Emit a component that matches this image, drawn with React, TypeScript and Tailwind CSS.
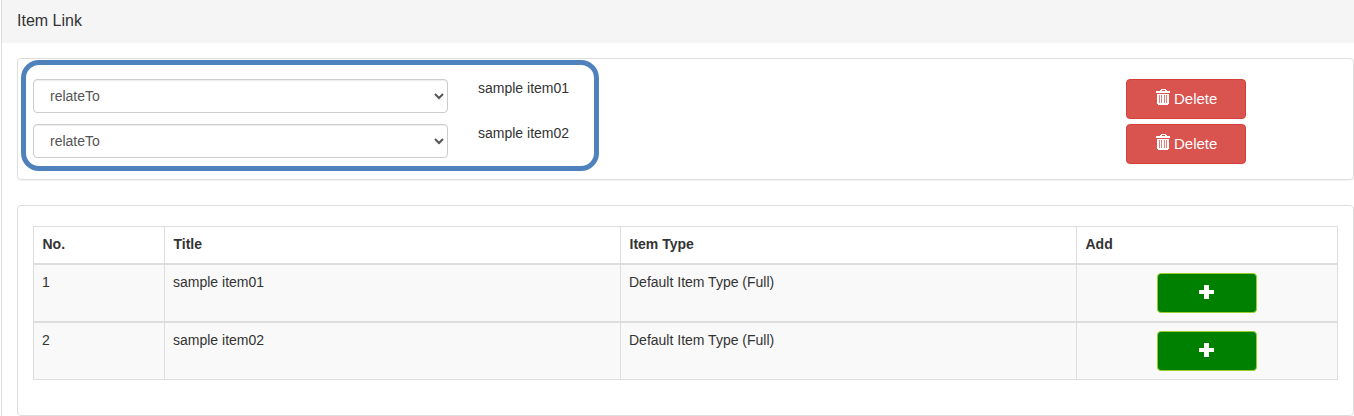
import React from "react";

const links = ["sample item01", "sample item02"];

function TrashIcon() {
  return (
    <svg width="14" height="16" viewBox="0 0 14 16" fill="#fff" shapeRendering="crispEdges" aria-hidden="true">
      <path d="M5 0h5v1h1v1h3v2H0V2h4V1h1zM6 1v1h3V1z" fillRule="evenodd" />
      <path d="M1 5h12v10h-1v1H2v-1H1z" />
      <path d="M3 6h1v8H3zM5 6h1v8H5zM8 6h1v8H8zM10 6h1v8h-1z" fill="#d9534f" fillOpacity="0.75" />
    </svg>
  );
}

function PlusIcon() {
  return (
    <svg width="15" height="14" viewBox="0 0 15 14" fill="#fff" aria-hidden="true">
      <path d="M5.5 0h4q.5 0 .5.5V5h4.5q.5 0 .5.5v3q0 .5-.5.5H10v4.500q0 .5-.5.5h-4q-.5 0-.5-.5V9H.5Q0 9 0 8.500v-3Q0 5 .5 5H5V.5q0-.5.5-.5z" />
    </svg>
  );
}

function LinkRow({ title }: { title: string }) {
  return (
    <div className="flex h-[45px] items-start">
      <select className="h-[34px] w-[415px] rounded-[4px] border border-[#ccc] bg-white px-3 py-1.5 text-[14px] leading-5 text-[#555] shadow-[inset_0_1px_1px_rgba(0,0,0,0.075)]">
        <option>relateTo</option>
      </select>
      <span className="-mt-px ml-[30px] w-[648px] leading-5">{title}</span>
      <button className="flex h-10 w-[120px] items-start gap-[4px] rounded-[4px] border border-[#d43f3a] bg-[#d9534f] pl-[29px] pt-[9px] text-[15px] leading-5 text-white">
        <TrashIcon />
        <span>Delete</span>
      </button>
    </div>
  );
}

export default function App() {
  return (
    <div className="h-[416px] w-full overflow-hidden bg-white pl-px font-['Liberation_Sans',Arial,sans-serif] text-[14px] leading-5 text-[#333]">
      <div className="h-full border-l border-[#ddd]">
        <header className="flex h-[43px] items-center bg-[#f5f5f5] pb-[1px] pl-[15px] text-[16px]">
          Item Link
        </header>
        <main className="pl-[15px] pt-[15px]">
          <section className="relative h-[122px] rounded-[4px] border border-[#ddd] pl-[15px] pt-[20px] shadow-[0_1px_1px_rgba(0,0,0,0.05)]">
            {links.map((t) => (
              <LinkRow key={t} title={t} />
            ))}
            <div className="pointer-events-none absolute left-[3px] top-[1px] h-[111px] w-[578px] rounded-[18px] border-[5px] border-[#4f81bd]" />
          </section>
          <section className="mt-[25px] h-[211px] rounded-[4px] border border-[#ddd] px-[15px] pt-[20px]">
            <table className="w-[1305px] table-fixed border-separate border-spacing-0 border-l border-t border-[#ddd] text-left">
              <colgroup>
                <col className="w-[131px]" />
                <col className="w-[456px]" />
                <col className="w-[456px]" />
                <col className="w-[261px]" />
              </colgroup>
              <thead>
                <tr className="h-[38px] align-top">
                  {["No.", "Title", "Item Type", "Add"].map((h) => (
                    <th key={h} className="border-b-2 border-r border-[#ddd] pl-[8.5px] pr-2 pt-[7px] font-bold">
                      {h}
                    </th>
                  ))}
                </tr>
              </thead>
              <tbody className="bg-[#f9f9f9]">
                {links.map((t, i) => (
                  <tr key={t} className="group h-[58px] align-top last:h-[57px]">
                    <td className="border-b-2 border-r border-[#ddd] px-2 pt-[7px] group-last:border-b">{i + 1}</td>
                    <td className="border-b-2 border-r border-[#ddd] px-2 pt-[7px] group-last:border-b">{t}</td>
                    <td className="border-b-2 border-r border-[#ddd] px-2 pt-[7px] group-last:border-b">
                      Default Item Type (Full)
                    </td>
                    <td className="border-b-2 border-r border-[#ddd] px-2 pt-[8px] group-last:border-b">
                      <button className="mx-auto flex h-10 w-[100px] items-start rounded-[4px] border border-[#9acd32] bg-[#008000] pl-[41px] pt-[11px]">
                        <PlusIcon />
                      </button>
                    </td>
                  </tr>
                ))}
              </tbody>
            </table>
          </section>
        </main>
      </div>
    </div>
  );
}
